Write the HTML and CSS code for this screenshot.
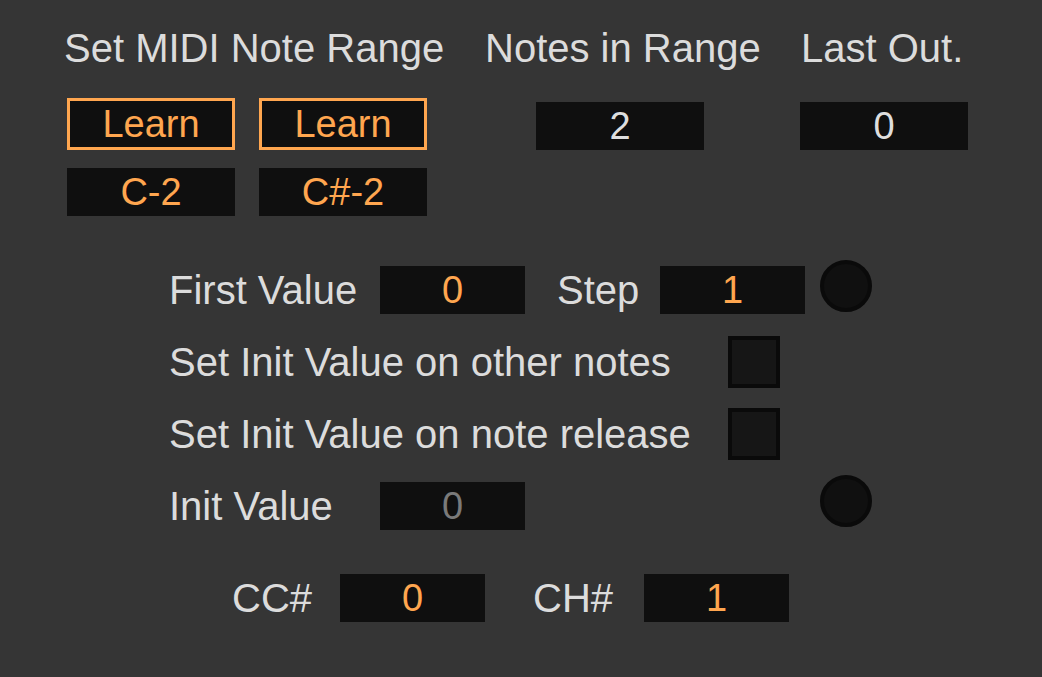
FILE: index.html
```html
<!DOCTYPE html>
<html>
<head>
<meta charset="utf-8">
<link rel="stylesheet" href="styles.css">
</head>
<body>
<div class="device">
  <div class="header">
    <div class="label col-a">Set MIDI Note Range</div>
    <div class="label col-b">Notes in Range</div>
    <div class="label col-c">Last Out.</div>
  </div>
  <div class="learn-row">
    <div class="learn">Learn</div>
    <div class="learn learn-2">Learn</div>
    <div class="num white notes">2</div>
    <div class="num white last">0</div>
  </div>
  <div class="note-row">
    <div class="num orange note1">C-2</div>
    <div class="num orange note2">C#-2</div>
  </div>
  <div class="section">
    <div class="row">
      <div class="label w-first">First Value</div>
      <div class="num orange small">0</div>
      <div class="label w-step">Step</div>
      <div class="num orange small">1</div>
      <div class="knob knob-1"></div>
    </div>
    <div class="row">
      <div class="label w-check">Set Init Value on other notes</div>
      <div class="check"></div>
    </div>
    <div class="row">
      <div class="label w-check">Set Init Value on note release</div>
      <div class="check"></div>
    </div>
    <div class="row">
      <div class="label w-first">Init Value</div>
      <div class="num gray small">0</div>
      <div class="knob knob-2"></div>
    </div>
  </div>
  <div class="cc-row">
    <div class="label w-cc">CC#</div>
    <div class="num orange small">0</div>
    <div class="label w-ch">CH#</div>
    <div class="num orange small">1</div>
  </div>
</div>
</body>
</html>
```
FILE: styles.css
```css
html, body {
  margin: 0;
  padding: 0;
  background: #353535;
  width: 1042px;
  height: 677px;
  overflow: hidden;
}
.device {
  font-family: "Liberation Sans", Arial, sans-serif;
  color: #dcdcdc;
}
.label {
  font-size: 40px;
  line-height: 48px;
  white-space: nowrap;
  color: #dcdcdc;
}
.header {
  display: flex;
  padding: 24px 0 0 64px;
}
.col-a { width: 421px; }
.col-b { width: 316px; }

.learn-row {
  display: flex;
  align-items: flex-end;
  margin-top: 26px;
  padding-left: 67px;
}
.learn {
  box-sizing: border-box;
  width: 168px;
  height: 52px;
  border: 3px solid #ffa64f;
  background: #0f0f0f;
  color: #ffa64f;
  font-size: 38px;
  line-height: 46px;
  text-align: center;
}
.learn-2 { margin-left: 24px; }
.num {
  box-sizing: border-box;
  width: 168px;
  height: 48px;
  background: #0f0f0f;
  font-size: 38px;
  line-height: 48px;
  text-align: center;
}
.small { width: 145px; }
.white { color: #dedede; }
.orange { color: #ffa64f; }
.gray { color: #7a7a7a; }
.notes { margin-left: 109px; }
.last { margin-left: 96px; }

.note-row {
  display: flex;
  margin-top: 18px;
  padding-left: 67px;
}
.note2 { margin-left: 24px; }

.section {
  margin-top: 48px;
  padding-left: 169px;
  display: flex;
  flex-direction: column;
  gap: 20px;
}
.row {
  display: flex;
  align-items: center;
  height: 52px;
}
.w-first { width: 211px; }
.w-step { width: 103px; margin-left: 32px; }
.w-check { width: 559px; }
.check {
  box-sizing: border-box;
  width: 52px;
  height: 52px;
  border: 4px solid #0a0a0a;
  background: #161616;
}
.knob {
  box-sizing: border-box;
  width: 52px;
  height: 52px;
  border-radius: 50%;
  border: 4px solid #0a0a0a;
  background: #101010;
}
.knob-1 { margin-left: 15px; margin-bottom: 8px; }
.knob-2 { margin-left: 295px; margin-bottom: 10px; }

.cc-row {
  display: flex;
  align-items: center;
  height: 52px;
  margin-top: 40px;
  padding-left: 232px;
}
.w-cc { width: 108px; }
.w-ch { width: 111px; margin-left: 48px; }
```
